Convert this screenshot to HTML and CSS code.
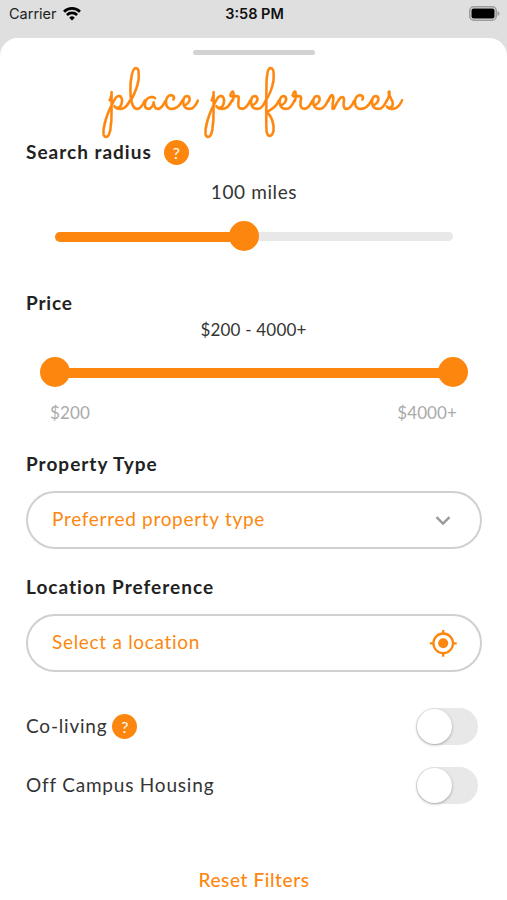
FILE: index.html
```html
<!DOCTYPE html>
<html lang="en">
<head>
    <meta charset="UTF-8">
    <meta name="viewport" content="width=device-width, initial-scale=1.0">
    <title>Place Preferences</title>
    <link rel="stylesheet" href="styles.css">
</head>
<body>
    <div class="status-bar">
        <div class="carrier">
            <span>Carrier</span>
            <svg width="18" height="14" viewBox="0 0 18 14" fill="none" stroke="#000" stroke-width="2.6">
                <path d="M1 4.7a11.4 11.4 0 0 1 16 0"/>
                <path d="M3.9 8a7.3 7.3 0 0 1 10.2 0"/>
                <path d="M9 13.6L6.2 10.7a4 4 0 0 1 5.6 0z" fill="#000" stroke="none"/>
            </svg>
        </div>
        <div class="time">3:58 PM</div>
        <div class="battery">
            <svg width="31" height="15" viewBox="0 0 31 15">
                <rect x="0.8" y="0.8" width="26.4" height="13.4" rx="4" fill="none" stroke="#9c9c9c" stroke-width="1.6"/>
                <rect x="2.5" y="2.5" width="23" height="10" rx="2" fill="#000"/>
                <path d="M28.5 5q2 .8 2 2.5t-2 2.5z" fill="#9c9c9c"/>
            </svg>
        </div>
    </div>

    <div class="sheet">
        <div class="handle"></div>
        <h1>place preferences</h1>

        <h2 class="radius-heading"><span>Search radius</span> <span class="help">?</span></h2>
        <div class="value radius-value">100 miles</div>
        <div class="slider">
            <div class="track"><div class="fill" style="width: 47.4%"></div></div>
            <div class="thumb" style="left: 47.4%"></div>
        </div>

        <h2 class="price-heading">Price</h2>
        <div class="value price-value">$200 - 4000+</div>
        <div class="slider price-slider">
            <div class="track"><div class="fill" style="width: 100%"></div></div>
            <div class="thumb" style="left: 0%"></div>
            <div class="thumb" style="left: 100%"></div>
        </div>
        <div class="range-labels"><span>$200</span><span>$4000+</span></div>

        <h2 class="type-heading">Property Type</h2>
        <div class="field">
            <span>Preferred property type</span>
            <svg width="28" height="28" viewBox="0 0 28 28" fill="none" stroke="#999" stroke-width="2.4">
                <path d="M7.5 11.2l6.5 6.3 6.5-6.3"/>
            </svg>
        </div>

        <h2 class="location-heading">Location Preference</h2>
        <div class="field">
            <span>Select a location</span>
            <svg width="28" height="28" viewBox="0 0 28 28" fill="none" stroke="#fd870e" stroke-width="2.3">
                <circle cx="14.2" cy="14.3" r="9.8"/>
                <circle cx="14.2" cy="14.3" r="5" fill="#fd870e" stroke="none"/>
                <path d="M14.2 .9v4M14.2 23.7v4M.8 14.3h4M23.7 14.3h4"/>
            </svg>
        </div>

        <div class="option coliving">
            <span class="option-text">Co-living</span>
            <span class="help">?</span>
            <span class="toggle"></span>
        </div>
        <div class="option campus">
            <span class="option-text">Off Campus Housing</span>
            <span class="toggle"></span>
        </div>

        <div class="reset">Reset Filters</div>
    </div>
</body>
</html>
```
FILE: styles.css
```css
* {
    box-sizing: border-box;
}
body {
    margin: 0;
    height: 900px;
    overflow: hidden;
    background-color: #dfdfdf;
    font-family: "Avenir Next", Lato, sans-serif;
    color: #343434;
}
svg {
    display: block;
}
.status-bar {
    display: grid;
    grid-template-columns: 1fr auto 1fr;
    align-items: center;
    height: 38px;
    padding: 0 7px 11px 9px;
    font-family: Inter, sans-serif;
    font-size: 14.5px;
    color: #222;
}
.carrier {
    display: flex;
    align-items: center;
    gap: 6px;
}
.time {
    font-weight: 600;
    color: #111;
}
.battery {
    justify-self: end;
}
.sheet {
    height: 862px;
    padding: 12px 25px 0 26px;
    border-radius: 18px 18px 0 0;
    background-color: #fff;
}
.handle {
    width: 122px;
    height: 5px;
    margin: 0 auto;
    border-radius: 3px;
    background-color: #d2d2d2;
}
h1 {
    height: 83px;
    margin: 0;
    font-family: "Sacramento", "Dancing Script", cursive;
    font-size: 58px;
    font-weight: 400;
    line-height: 85px;
    letter-spacing: 0.55px;
    text-align: center;
    white-space: nowrap;
    color: #fd870e;
    -webkit-text-stroke: 0.4px #fd870e;
}
h2 {
    display: flex;
    align-items: center;
    height: 28px;
    margin: 0;
    font-size: 19px;
    font-weight: 700;
    letter-spacing: 1px;
    color: #222;
}
h2.radius-heading > span:first-child,
h2.price-heading,
h2.type-heading,
h2.location-heading {
    padding-bottom: 2px;
}
.help {
    width: 25px;
    height: 25px;
    border-radius: 50%;
    background-color: #fd870e;
    color: #fff;
    font-size: 16px;
    font-weight: 400;
    line-height: 25px;
    text-align: center;
    letter-spacing: 0;
}
h2 .help {
    margin-left: 12px;
}
.value {
    height: 24px;
    line-height: 24px;
    text-align: center;
    font-size: 19px;
    letter-spacing: 0.6px;
}
.radius-value {
    margin-top: 14px;
}
.slider {
    position: relative;
    display: flex;
    align-items: center;
    height: 30px;
    margin: 17px 29px 0 29px;
}
.track {
    flex: 1;
    height: 9px;
    border-radius: 5px;
    background-color: #e8e8e8;
}
.fill {
    height: 10px;
    border-radius: 5px;
    background-color: #fd870e;
}
.thumb {
    position: absolute;
    top: 0;
    width: 30px;
    height: 30px;
    margin-left: -15px;
    border-radius: 50%;
    background-color: #fd870e;
}
.price-heading {
    margin-top: 38px;
    letter-spacing: 0.8px;
}
.price-value {
    margin-top: 1px;
    padding-right: 1px;
    font-size: 17px;
    letter-spacing: 0.2px;
}
.price-slider {
    margin-top: 15px;
}
.range-labels {
    display: flex;
    justify-content: space-between;
    height: 24px;
    margin: 14px 25px 0 24px;
    line-height: 24px;
    font-size: 17px;
    letter-spacing: 0.1px;
    color: #aaa;
}
.type-heading {
    margin-top: 25px;
}
.field {
    display: flex;
    align-items: center;
    justify-content: space-between;
    height: 58px;
    margin-top: 13px;
    padding: 0 23px 0 24px;
    border: 2px solid #d0d0d0;
    border-radius: 29px;
    font-size: 19px;
    letter-spacing: 0.7px;
    color: #fd870e;
}
.field span {
    padding-bottom: 3px;
}
.location-heading {
    margin-top: 24px;
}
.option {
    display: flex;
    align-items: center;
    height: 37px;
    padding-right: 4px;
    font-size: 19px;
}
.option-text {
    padding-bottom: 2px;
    letter-spacing: 0.8px;
}
.option .help {
    margin-left: 5px;
}
.coliving {
    margin-top: 36px;
}
.campus {
    margin-top: 22px;
}
.toggle {
    width: 62px;
    height: 37px;
    margin-left: auto;
    padding: 1px;
    border-radius: 19px;
    background-color: #e8e8e8;
}
.toggle::before {
    content: "";
    display: block;
    width: 35px;
    height: 35px;
    border-radius: 50%;
    background-color: #fff;
    box-shadow: 0 1px 3px rgba(0, 0, 0, 0.3);
}
.reset {
    height: 24px;
    margin-top: 64px;
    line-height: 24px;
    text-align: center;
    font-size: 19px;
    font-weight: 500;
    letter-spacing: 0.6px;
    color: #fd870e;
}
```
